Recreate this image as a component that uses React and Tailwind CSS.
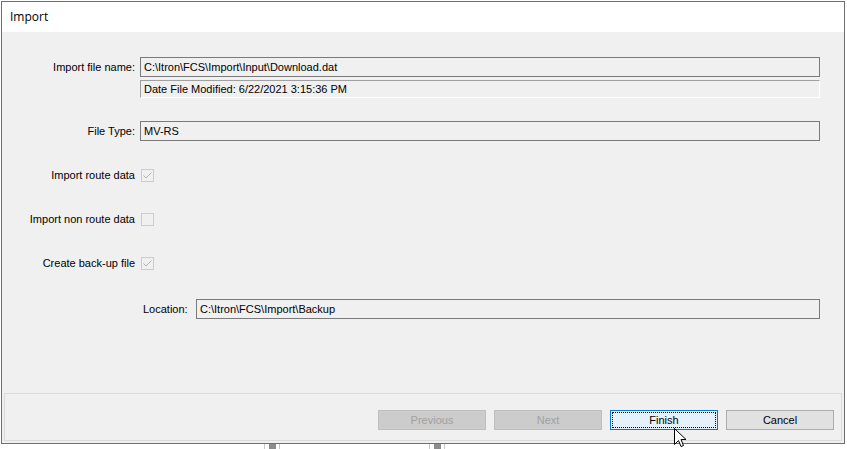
import React from "react";

// Champ en lecture seule, style WinForms
function Field({ children, className = "" }) {
  return (
    <div
      className={`h-[20px] border border-[#7a7a7a] bg-[#f0f0f0] pl-[3px] flex items-center text-[11px] text-black ${className}`}
    >
      {children}
    </div>
  );
}

function CheckRow({ label, checked }) {
  return (
    <div className="flex items-center h-[13px]">
      <div className="w-[139px] text-right pr-[6px] text-[11px] text-black whitespace-nowrap">{label}</div>
      <div className="w-[13px] h-[13px] border border-[#cccccc] bg-[#f0f0f0] flex items-center justify-center">
        {checked && (
          <svg width="11" height="11" viewBox="0 0 11 11">
            <path d="M1.5 5.5 L4 8 L9.5 2.5" fill="none" stroke="#b5b5b5" strokeWidth="1" />
          </svg>
        )}
      </div>
    </div>
  );
}

function Btn({ children, variant }) {
  if (variant === "disabled") {
    return (
      <div className="w-[108px] h-[20px] border border-[#bfbfbf] bg-[#cccccc] text-[#a0a0a0] text-[11px] flex items-center justify-center">
        {children}
      </div>
    );
  }
  if (variant === "focus") {
    return (
      <div className="w-[108px] h-[20px] border border-[#0078d7] bg-[#e5f1fb] p-[1px]">
        <div className="w-full h-full border border-dotted border-black text-black text-[11px] flex items-center justify-center">
          {children}
        </div>
      </div>
    );
  }
  return (
    <div className="w-[108px] h-[20px] border border-[#adadad] bg-[#e1e1e1] text-black text-[11px] flex items-center justify-center">
      {children}
    </div>
  );
}

export default function App() {
  return (
    <div
      className="w-[847px] h-[449px] bg-white pt-[1px] pl-[1px] overflow-hidden"
      style={{ fontFamily: '"Liberation Sans", Arial, sans-serif' }}
    >
      {/* Fenêtre */}
      <div className="w-[844px] h-[443px] border border-[#6e6e6e] flex flex-col">
        {/* Barre de titre */}
        <div
          className="h-[30px] bg-white pl-[8px] flex items-center text-[12px] text-black shrink-0"
          style={{ fontFamily: '"Open Sans", "Noto Sans", sans-serif' }}
        >
          Import
        </div>

        {/* Corps */}
        <div className="flex-1 bg-[#f0f0f0] flex flex-col">
          {/* Nom du fichier */}
          <div className="flex mt-[25px]">
            <div className="w-[138px] text-right pr-[5px] text-[11px] text-black h-[20px] flex items-center justify-end">
              Import file name:
            </div>
            <div className="flex flex-col">
              <Field className="w-[680px]">C:\Itron\FCS\Import\Input\Download.dat</Field>
              <div className="w-[680px] h-[18px] mt-[3px] border border-[#a0a0a0] border-b-white border-r-white bg-[#f0f0f0] pl-[3px] flex items-center text-[11px] text-black">
                Date File Modified: 6/22/2021 3:15:36 PM
              </div>
            </div>
          </div>

          {/* Type */}
          <div className="flex mt-[23px] items-center">
            <div className="w-[138px] text-right pr-[5px] text-[11px] text-black">File Type:</div>
            <Field className="w-[680px]">MV-RS</Field>
          </div>

          {/* Cases à cocher */}
          <div className="mt-[28px] flex flex-col gap-[31px]">
            <CheckRow label="Import route data" checked />
            <CheckRow label="Import non route data" />
            <CheckRow label="Create back-up file" checked />
          </div>

          {/* Emplacement */}
          <div className="flex mt-[29px] items-center pl-[141px]">
            <div className="w-[53px] text-[11px] text-black">Location:</div>
            <Field className="w-[624px]">C:\Itron\FCS\Import\Backup</Field>
          </div>

          {/* Boutons */}
          <div className="mt-auto mx-[2px] mb-[2px] h-[48px] border border-[#dadada] flex justify-end items-start pt-[16px] pr-[7px] gap-[8px] relative">
            <Btn variant="disabled">Previous</Btn>
            <Btn variant="disabled">Next</Btn>
            <Btn variant="focus">Finish</Btn>
            <Btn>Cancel</Btn>
            {/* Curseur */}
            <svg
              className="absolute left-[669px] top-[34px]"
              width="13"
              height="20"
              viewBox="0 0 13 20"
            >
              <path
                d="M0.5 0.5 L0.5 16.5 L4.5 12.5 L7 18.5 L9.5 17.5 L7 11.5 L12 11.5 Z"
                fill="white"
                stroke="black"
                strokeWidth="1"
              />
            </svg>
          </div>
        </div>
      </div>

      {/* Fenêtres en arrière-plan */}
      <div className="flex h-[5px]">
        <div className="ml-[263px] w-[16px] flex">
          <div className="w-[1px] bg-[#c8c8c8]" />
          <div className="ml-[4px] w-[7px] bg-[#8c8c8c]" />
          <div className="ml-[3px] w-[1px] bg-[#c8c8c8]" />
        </div>
        <div className="ml-[149px] w-[16px] flex">
          <div className="w-[1px] bg-[#c8c8c8]" />
          <div className="ml-[4px] w-[7px] bg-[#8c8c8c]" />
          <div className="ml-[3px] w-[1px] bg-[#c8c8c8]" />
        </div>
      </div>
    </div>
  );
}
